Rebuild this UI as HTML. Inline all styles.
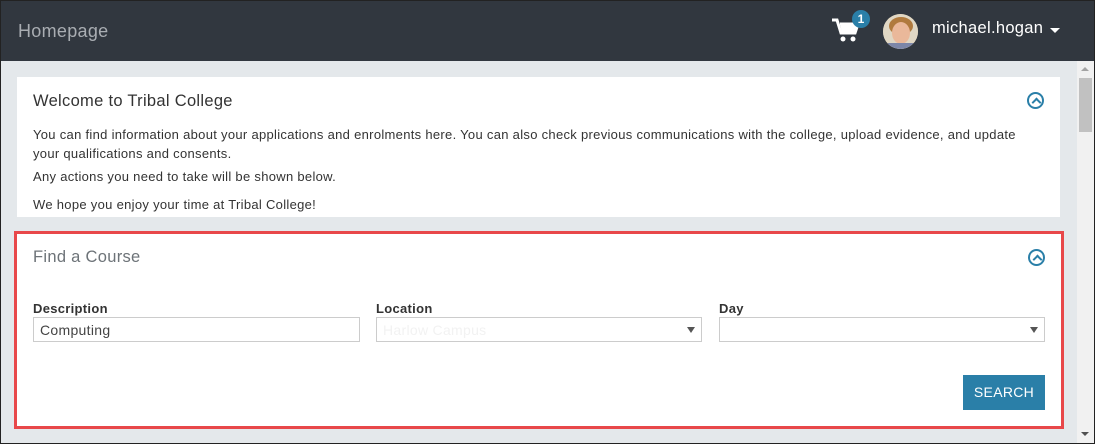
<!DOCTYPE html>
<html><head><meta charset="utf-8"><style>
*{margin:0;padding:0;box-sizing:border-box}
body{width:1095px;height:444px;overflow:hidden;font-family:"Liberation Sans",sans-serif;background:#e4e8eb;position:relative;color:#333;letter-spacing:0.3px}
.frame{position:absolute;left:0;top:0;width:1095px;height:444px;border:1px solid #222;pointer-events:none;z-index:10}
.hdr{position:absolute;left:0;top:0;width:1095px;height:61px;background:#31373f}
.hdr .t{position:absolute;left:18px;top:21px;font-size:18px;color:#a9adb2}
.user{position:absolute;left:932px;top:19px;font-size:16.5px;color:#fff}
.caret{position:absolute;left:1050px;top:28px;width:0;height:0;border-left:5px solid transparent;border-right:5px solid transparent;border-top:5px solid #fff}
.badge{position:absolute;left:852px;top:10px;width:18px;height:18px;border-radius:50%;background:#2a7fa8;color:#fff;font-size:12px;font-weight:bold;text-align:center;line-height:18px;letter-spacing:0}
.av{position:absolute;left:883px;top:14px;width:35px;height:35px;border-radius:50%;background:#d9c3a3;overflow:hidden}
.card{position:absolute;background:#fff}
.chev{position:absolute;width:17px;height:17px;border:2px solid #2a7fa8;border-radius:50%}
.chev:after{content:"";position:absolute;left:4px;top:5px;width:5px;height:5px;border-left:2px solid #2a7fa8;border-top:2px solid #2a7fa8;transform:rotate(45deg)}
p{font-size:13px;line-height:19px;color:#333}
.lbl{position:absolute;font-size:13px;font-weight:bold;color:#333}
.inp{position:absolute;height:25px;border:1px solid #ccc;background:#fff;font-size:14px;padding:4px 6px;color:#444}
.arr{position:absolute;right:6px;top:9px;border-left:4px solid transparent;border-right:4px solid transparent;border-top:6px solid #555}
.btn{position:absolute;left:963px;top:375px;width:82px;height:35px;background:#2a7fa8;color:#fff;font-size:14px;text-align:center;line-height:35px}
.sb{position:absolute;left:1077px;top:61px;width:17px;height:383px;background:#f1f1f1}
.thumb{position:absolute;left:1079px;top:78px;width:13px;height:54px;background:#c1c1c1}
</style></head><body>
<div class="hdr"><div class="t">Homepage</div>
<svg style="position:absolute;left:832px;top:18px" width="28" height="26" viewBox="0 0 28 26"><path d="M0 2h5l4 13h14l3-9H8" fill="none" stroke="#fff" stroke-width="3"/><path d="M8 6h18l-3 9H10z" fill="#fff"/><circle cx="11" cy="21" r="2.5" fill="#fff"/><circle cx="21" cy="21" r="2.5" fill="#fff"/></svg>
<div class="badge">1</div>
<div class="av"><svg width="35" height="35"><rect width="35" height="35" fill="#e0d7c4"/><ellipse cx="18" cy="12" rx="12" ry="9" fill="#b07a3e"/><ellipse cx="18" cy="19" rx="9" ry="11" fill="#eab89a"/><rect x="5" y="29" width="26" height="8" fill="#7c86a8"/></svg></div>
<div class="user">michael.hogan</div><div class="caret"></div>
</div>
<div class="card" style="left:17px;top:77px;width:1043px;height:140px">
<div style="position:absolute;left:16px;top:15px;font-size:16.5px;color:#333">Welcome to Tribal College</div>
<div class="chev" style="left:1010px;top:15px"></div>
<div style="position:absolute;left:16px;top:48px;width:1010px">
<p>You can find information about your applications and enrolments here. You can also check previous communications with the college, upload evidence, and update your qualifications and consents.</p>
<p style="margin-top:4px">Any actions you need to take will be shown below.</p>
<p style="margin-top:9px">We hope you enjoy your time at Tribal College!</p></div>
</div>
<div class="card" style="left:14px;top:231px;width:1050px;height:198px;border:3px solid #e8484a"></div>
<div style="position:absolute;left:33px;top:248px;font-size:16.5px;color:#6d7378">Find a Course</div>
<div class="chev" style="left:1028px;top:249px"></div>
<div class="lbl" style="left:33px;top:301px">Description</div>
<div class="inp" style="left:33px;top:317px;width:327px">Computing</div>
<div class="lbl" style="left:376px;top:301px">Location</div>
<div class="inp" style="left:376px;top:317px;width:326px;color:#f2f2f2">Harlow Campus<div class="arr"></div></div>
<div class="lbl" style="left:719px;top:301px">Day</div>
<div class="inp" style="left:719px;top:317px;width:326px"><div class="arr"></div></div>
<div class="btn">SEARCH</div>
<div class="sb"></div><div class="thumb"></div>
<div style="position:absolute;left:1081px;top:67px;border-left:4px solid transparent;border-right:4px solid transparent;border-bottom:4px solid #a3a3a3"></div>
<div style="position:absolute;left:1081px;top:432px;border-left:4px solid transparent;border-right:4px solid transparent;border-top:4px solid #505050"></div>
<div class="frame"></div>
</body></html>
